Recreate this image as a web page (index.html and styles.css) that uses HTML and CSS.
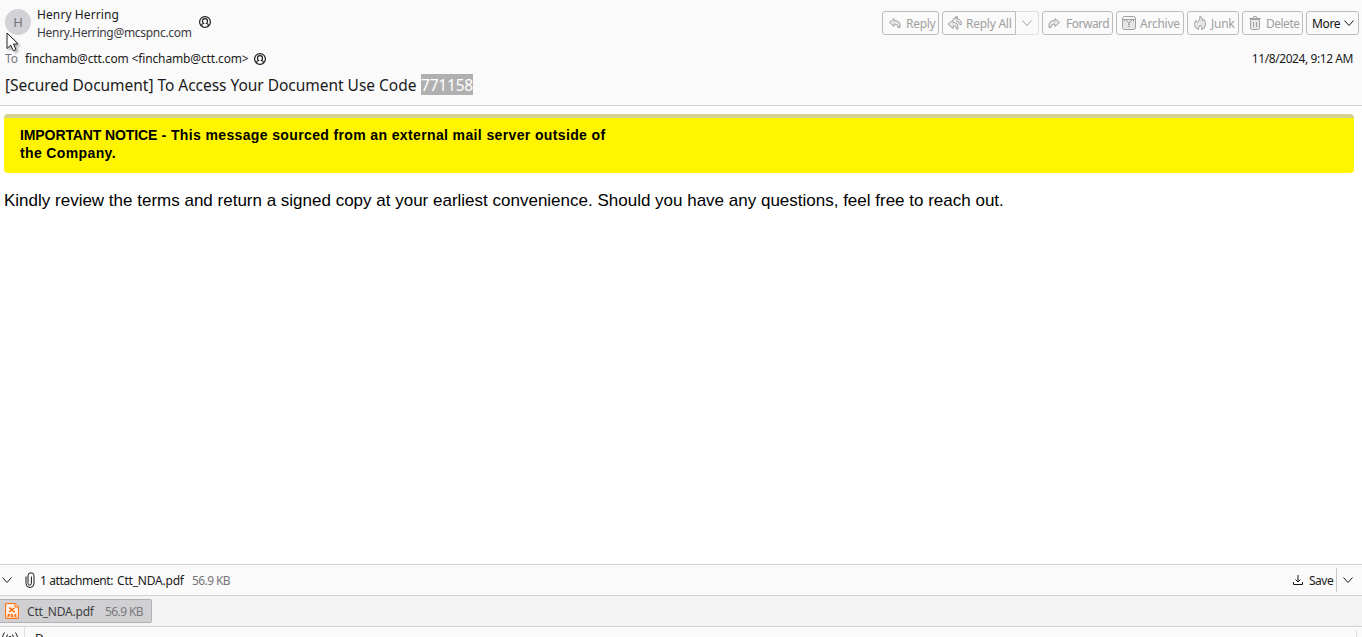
FILE: index.html
```html
<!DOCTYPE html>
<html lang="en">
<head>
    <meta charset="UTF-8">
    <meta name="viewport" content="width=device-width, initial-scale=1.0">
    <title>[Secured Document]</title>
    <link rel="stylesheet" href="styles.css">
</head>
<body>
    <header class="message-header">
        <div class="header-top">
            <div class="avatar">H</div>
            <div class="sender">
                <div class="sender-name">Henry Herring</div>
                <div class="sender-email">Henry.Herring@mcspnc.com</div>
            </div>
            <svg class="contact-icon" viewBox="0 0 12 12"><circle cx="6" cy="6" r="5.4"/><path d="M2.8 10V8.8q0-.8 1.700-1.300Q3.500 6.500 3.500 5 3.500 2.700 6 2.700T8.500 5q0 1.500-1 2.500 1.700.5 1.700 1.300V10"/></svg>
            <div class="toolbar">
                <button class="reply"><svg viewBox="0 0 14 14"><path class="fill" d="M6 2.500 1.500 6.500l4.500 4V8.300h2q2 0 2 3.200h2V9q-.4-4.200-4-4.200H6z"/></svg><span>Reply</span></button>
                <div class="split">
                    <button class="reply-all"><svg viewBox="0 0 16 14"><path class="fill" d="M9 3.500V.8L6 3.500M9 .8l-3 3M9 .8l1.500 0V3q4 .5 4 5.500h-2q0-3-3.500-3.500"/><path class="fill" d="M6 4 1 8.200l5 4.300V10h1.500q2 0 2 3h1.500v-2q0-4-3.500-4.500H6z"/></svg><span>Reply All</span></button>
                    <button class="reply-menu"><svg viewBox="0 0 12 12"><path d="m1.500 3.500 4.500 5 4.500-5"/></svg></button>
                </div>
                <button class="forward"><svg viewBox="0 0 14 14"><path class="fill" d="m8 2.500 4.500 4-4.500 4V8.300H6q-2 0-2 3.200H2V9q.4-4.200 4-4.200h2z"/></svg><span>Forward</span></button>
                <button class="archive"><svg viewBox="0 0 16 16"><path class="fill" d="M1.500 4.500h13v8q0 2-2 2h-9q-2 0-2-2z"/><path d="M1.500 5V3.500q0-2 2-2h9q2 0 2 2V5M4.500 4.500 8 8l3.500-3.500M8 8v1M7 9.500h2M7 11.500h2M3.500 4.500v2M12.500 4.500v2"/></svg><span>Archive</span></button>
                <button class="junk"><svg viewBox="0 0 14 16"><path class="fill" d="M7 1q3 1.500 2.500 5L11 4.500q2 3 1.500 5.500-.5 4-4 4.500 1.500-2-1-4.500Q5 12 5.500 14.500 1.500 13 1.500 9.500 1.500 7 3 5.500l1.500 2Q7.500 4.500 7 1z"/></svg><span>Junk</span></button>
                <button class="delete"><svg viewBox="0 0 14 16"><path class="fill" d="M2.500 4.500h9v8q0 2-2 2h-5q-2 0-2-2z"/><path d="M1 3.500h12M5 3q0-1.500 1-1.500h2q1 0 1 1.500M5.500 7v5M8.500 7v5"/></svg><span>Delete</span></button>
                <button class="more"><span>More</span><svg viewBox="0 0 12 12"><path d="m1.500 3.500 4.500 5 4.500-5"/></svg></button>
            </div>
        </div>
        <div class="recipient-row">
            <span class="to-label">To</span>
            <span class="recipient">finchamb@ctt.com &lt;finchamb@ctt.com&gt;</span>
            <svg class="contact-icon" viewBox="0 0 12 12"><circle cx="6" cy="6" r="5.4"/><path d="M2.800 10V8.800q0-.8 1.700-1.300Q3.500 6.500 3.500 5 3.500 2.700 6 2.700T8.500 5q0 1.500-1 2.500 1.700.5 1.700 1.300V10"/></svg>
            <span class="date">11/8/2024, 9:12 AM</span>
        </div>
        <div class="subject"><span class="subject-text">[Secured Document] To Access Your Document Use Code</span><span class="code">771158</span></div>
        <svg class="cursor" viewBox="0 0 14 20"><path d="M1 1v15.500l3.700-3.300 2.600 5.600 2.700-1.300-2.500-5.300 4.500-.3z"/></svg>
    </header>

    <main class="message-body">
        <div class="notice"><span class="notice-title">IMPORTANT NOTICE</span> - This message sourced from an external mail server outside of<br>the Company.</div>
        <p class="message-text">Kindly review the terms and return a signed copy at your earliest convenience. Should you have any questions, feel free to reach out.</p>
    </main>

    <section class="attachment-bar">
        <svg class="chevron" viewBox="0 0 12 12"><path d="m1.500 3.500 4.500 5 4.500-5"/></svg>
        <svg class="clip" viewBox="0 0 10 16"><path d="M1 4.500v7q0 4 4 4t4-4v-8Q9 .8 6 .8T3 3.500v7.700q0 2 1.700 2t1.700-2V4.500"/></svg>
        <span class="attachment-count">1 attachment:</span>
        <span class="attachment-name">Ctt_NDA.pdf</span>
        <span class="attachment-size">56.9 KB</span>
        <div class="save">
            <svg class="save-icon" viewBox="0 0 12 12"><path d="M6 1v7M3.500 5.500 6 8l2.500-2.500M1.500 8v2.500h9V8"/></svg>
            <span class="save-text">Save</span>
            <svg class="chevron" viewBox="0 0 12 12"><path d="m1.500 3.500 4.500 5 4.500-5"/></svg>
        </div>
    </section>

    <section class="attachment-list">
        <div class="attachment-item">
            <svg class="pdf-icon" viewBox="0 0 14 16"><path class="page" d="M.6.6h9.900l2.900 2.900v11.900H.6z"/><path class="fold" d="M10 1v3h3"/><path class="mark" d="M4 5q2 0 3 2t3 2M9.500 5 4 9"/><path class="label" d="M3 14.500v-3h1.500V13H3M6.200 11.500v2.500h1.300v-2.500zM11.500 11.500H9.800V14h1.700M9.800 12.800h1.500"/></svg>
            <span class="item-name">Ctt_NDA.pdf</span>
            <span class="item-size">56.9 KB</span>
        </div>
    </section>

    <footer class="status-bar">
        <div class="online"><svg viewBox="0 0 18 14"><circle cx="9" cy="7" r="1.500"/><path d="M6.500 3.500q-2.500 3.500 0 7M11.500 3.500q2.500 3.500 0 7M3.500 1.500q-4 5.500 0 11M14.500 1.500q4 5.500 0 11"/></svg></div>
        <div class="status-text">D</div>
        <div class="status-end"></div>
    </footer>
</body>
</html>
```
FILE: styles.css
```css
* {
    box-sizing: border-box;
}
body {
    margin: 0;
    height: 637px;
    overflow: hidden;
    display: flex;
    flex-direction: column;
    background-color: #fff;
    color: #1a1a1a;
    font-family: "Noto Sans", "Open Sans", sans-serif;
    font-size: 12px;
}
svg {
    fill: none;
    stroke: currentColor;
    flex: none;
}
span {
    white-space: nowrap;
}
.message-header {
    position: relative;
    flex: none;
    height: 106px;
    background-color: #fafafa;
    border-bottom: 1px solid #d2d2d4;
}
.header-top {
    display: flex;
    height: 46px;
    padding: 5px 3px 0 5px;
}
.avatar {
    width: 26px;
    height: 26px;
    margin-top: 4px;
    border-radius: 50%;
    background-color: #d2d2d7;
    color: #74747a;
    font-size: 13px;
    line-height: 27px;
    text-align: center;
}
.sender {
    width: 155px;
    margin-left: 6px;
    padding-top: 1px;
    line-height: 18px;
    white-space: nowrap;
}
.sender-name {
    letter-spacing: 0.1px;
}
.sender-email {
    color: #3a3a3e;
    letter-spacing: -0.3px;
}
.contact-icon {
    width: 12px;
    height: 12px;
    stroke-width: 1.2;
}
.header-top .contact-icon {
    margin: 11px 0 0 7px;
}
.toolbar {
    display: flex;
    gap: 3px;
    height: 24px;
    margin: 6px 0 0 auto;
}
button {
    display: flex;
    align-items: center;
    height: 24px;
    padding: 0 0 0 6px;
    border: 1px solid #bdbdbd;
    border-radius: 3px;
    background-color: #fafafa;
    color: #a0a0a0;
    font: inherit;
}
button svg {
    width: 14px;
    height: 14px;
}
button span {
    margin-left: 3px;
    letter-spacing: -0.25px;
}
.fill {
    fill: #e6e6e6;
}
.reply {
    width: 57px;
    padding-left: 5px;
}
.reply svg,
.forward svg {
    margin-top: -1px;
}
.reply span {
    letter-spacing: -0.3px;
    margin-left: 4px;
}
.split {
    display: flex;
}
.reply-all {
    width: 74px;
    padding-left: 4px;
    border-radius: 3px 0 0 3px;
}
.reply-all svg {
    width: 16px;
}
.reply-menu {
    width: 23px;
    padding-left: 5px;
    border-color: #dedede;
    border-left: 0;
    border-radius: 0 3px 3px 0;
}
.reply-menu svg {
    width: 12px;
    height: 12px;
}
.forward {
    width: 71px;
    padding-left: 4px;
}
.forward span {
    margin-left: 5px;
    letter-spacing: -0.5px;
}
.archive {
    width: 68px;
    padding-left: 4px;
}
.archive svg {
    width: 16px;
    height: 16px;
}
.junk {
    width: 52px;
    padding-left: 5px;
}
.junk span {
    margin-left: 4px;
}
.junk svg,
.delete svg {
    height: 16px;
}
.delete {
    width: 61px;
    padding-left: 5px;
}
.delete span {
    margin-left: 4px;
    letter-spacing: -0.5px;
}
.more {
    width: 53px;
    padding-left: 5px;
    color: #111;
}
.more span {
    width: 28px;
    margin: 0 3px 0 0;
    letter-spacing: -0.35px;
}
.more svg {
    width: 12px;
    height: 12px;
}
.recipient-row {
    display: flex;
    align-items: center;
    height: 26px;
    padding: 0 9px 0 5px;
}
.to-label {
    width: 20px;
    color: #75757a;
}
.recipient {
    width: 224px;
    letter-spacing: -0.14px;
}
.recipient-row span {
    padding-bottom: 1px;
}
.recipient-row .contact-icon {
    margin-left: 5px;
}
.date {
    margin-left: auto;
    letter-spacing: -0.42px;
}
.subject {
    display: flex;
    height: 28px;
    padding: 2px 5px;
    font-size: 15.5px;
    line-height: 23px;
}
.subject-text {
    width: 416px;
    letter-spacing: -0.03px;
}
.code {
    width: 52px;
    height: 21px;
    background-color: #b0b0b0;
    color: #fff;
    letter-spacing: -0.2px;
}
.cursor {
    position: absolute;
    left: 6px;
    top: 32px;
    width: 14px;
    height: 20px;
    fill: #fff;
    stroke: #222;
    filter: drop-shadow(2px 2px 1px rgba(0, 0, 0, 0.3));
}
.message-body {
    flex: 1;
    padding: 8px 8px 0 4px;
    color: #000;
    font-family: "Liberation Sans", Arial, sans-serif;
}
.notice {
    height: 59px;
    padding: 8px 16px;
    border-top: 4px solid #d4d094;
    border-radius: 4px;
    background-color: #fff500;
    font-size: 14px;
    font-weight: bold;
    letter-spacing: 0.37px;
    line-height: 18px;
}
.notice-title {
    letter-spacing: -0.1px;
}
.message-text {
    margin: 18px 0 0;
    font-size: 17px;
    line-height: 20px;
    white-space: nowrap;
}
.attachment-bar {
    display: flex;
    flex: none;
    align-items: center;
    height: 31px;
    border-top: 1px solid #d2d2d4;
    background-color: #fafafa;
}
.attachment-bar span {
    padding-top: 1px;
}
.chevron {
    width: 12px;
    height: 12px;
    margin-left: 1px;
}
.clip {
    width: 10px;
    height: 16px;
    margin-left: 12px;
}
.attachment-count {
    width: 77px;
    margin-left: 5px;
    letter-spacing: -0.4px;
}
.attachment-name {
    width: 75px;
    letter-spacing: -0.2px;
}
.attachment-size {
    color: #76767a;
    letter-spacing: -0.6px;
}
.save {
    display: flex;
    align-items: center;
    height: 24px;
    margin-left: auto;
    padding-right: 8px;
}
.save-icon {
    width: 12px;
    height: 12px;
}
.save-text {
    width: 28px;
    margin-left: 5px;
    border-right: 1px solid #c8c8c8;
    letter-spacing: -0.5px;
    line-height: 23px;
}
.save .chevron {
    margin-left: 5px;
}
.attachment-list {
    flex: none;
    height: 31px;
    padding-top: 3px;
    border-top: 1px solid #d2d2d4;
    background-color: #f3f3f3;
}
.attachment-item {
    display: flex;
    align-items: center;
    width: 152px;
    height: 24px;
    padding-left: 5px;
    border: 1px solid #b1b1b3;
    border-left: 0;
    border-radius: 0 2px 2px 0;
    background-color: #d0d0d2;
    color: #3f3f42;
}
.pdf-icon {
    width: 14px;
    height: 16px;
    stroke: #f60;
}
.page {
    fill: #fff1e8;
}
.mark {
    stroke-width: 1.5;
}
.item-name {
    width: 78px;
    margin-left: 8px;
    letter-spacing: -0.2px;
}
.item-size {
    color: #7a7a7d;
    letter-spacing: -0.6px;
}
.status-bar {
    display: flex;
    flex: none;
    height: 11px;
    border-top: 1px solid #d2d2d4;
    background-color: #fafafa;
    overflow: hidden;
}
.online {
    width: 25px;
    padding: 4px 0 0 1px;
    border-right: 1px solid #dedede;
}
.online svg {
    width: 18px;
    height: 14px;
}
.status-text {
    margin-left: 10px;
    padding-top: 3px;
}
.status-end {
    width: 6px;
    margin: 3px 0 0 auto;
    border-left: 1px solid #dedede;
}
```
